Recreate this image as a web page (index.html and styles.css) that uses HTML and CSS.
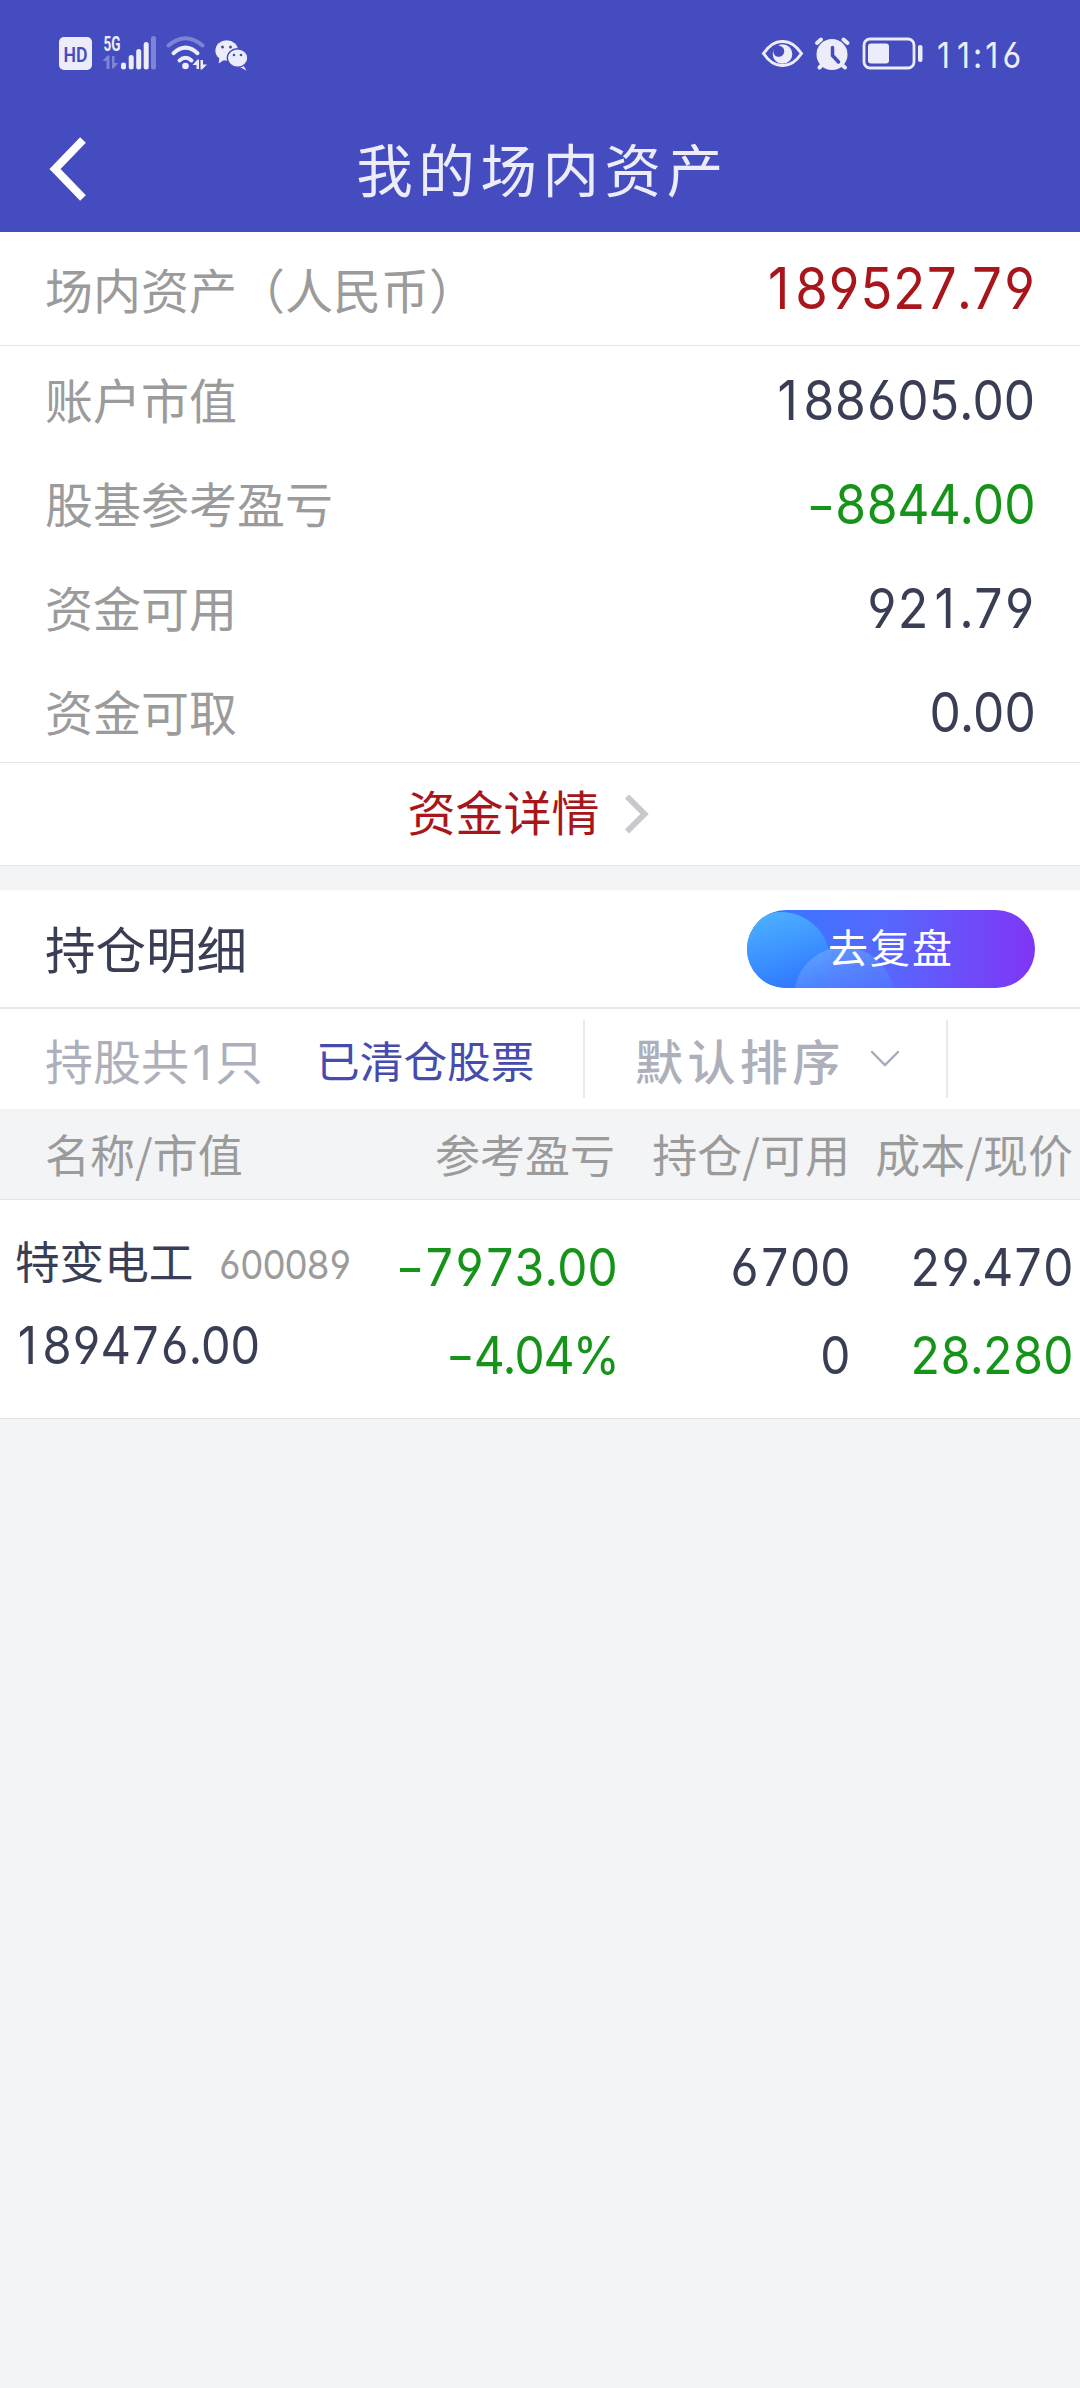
FILE: index.html
```html
<!DOCTYPE html>
<html lang="zh-CN">
<head>
<meta charset="utf-8">
<title>我的场内资产</title>
<link rel="stylesheet" href="styles.css">
</head>
<body>
<header class="top">
  <div class="status">
    <svg class="status-left" width="200" height="46" viewBox="56 30 200 46" fill="#ececfb">
      <rect x="59" y="37" width="33" height="33" rx="5"/>
      <text x="75.500" y="61.500" class="hd" text-anchor="middle" textLength="24" lengthAdjust="spacingAndGlyphs">HD</text>
      <text x="103.500" y="51" class="fiveg" textLength="17" lengthAdjust="spacingAndGlyphs">5G</text>
      <g opacity=".35"><path d="M102.500 61l5-5.500h2V69h-3V61zM118.500 63l-5 5.500h-1.500V56h2.500v7z"/><rect x="151" y="36" width="5" height="33.500" rx="2.500"/></g>
      <rect x="121" y="62.500" width="5" height="7" rx="2.300"/>
      <rect x="128.700" y="55" width="5" height="14.500" rx="2.500"/>
      <rect x="136.200" y="49" width="5" height="20.500" rx="2.500"/>
      <rect x="143.700" y="42" width="5" height="27.500" rx="2.500"/>
      <g fill="none" stroke="#ececfb" stroke-width="4" stroke-linecap="round">
        <path d="M168.500 45.500Q185.500 31 202.500 45.500" opacity=".35"/>
        <path d="M173.500 53.200Q185.500 42 197.500 53.200"/>
        <path d="M179.500 60.500Q185.500 55 191.500 60.500"/>
      </g>
      <circle cx="185.500" cy="66" r="3.300"/>
      <path d="M192.500 65l5-5.500h1.500V69h-2.500v-4zM207 64.500l-5 5h-1.500V60h2.500v4.500z"/>
      <ellipse cx="226.700" cy="50.500" rx="11.300" ry="10.300"/>
      <path d="M219.500 57l-.8 6.500 6-4z"/>
      <path d="M243 65l3.500 5.500-7-3.500z"/>
      <ellipse cx="237.600" cy="58" rx="10.300" ry="9.300" stroke="#444cbf" stroke-width="1.400"/>
      <g fill="#444cbf"><circle cx="222.500" cy="47" r="1.500"/><circle cx="230.500" cy="47" r="1.500"/><circle cx="234" cy="55" r="1.300"/><circle cx="241" cy="55" r="1.300"/></g>
    </svg>
    <div class="status-right">
      <svg width="164" height="46" viewBox="760 30 164 46" fill="#ececfb">
        <path d="M763.500 53.500Q772 41 782.500 41.500Q793 41 801.500 53.500Q793 66 782.500 65.500Q772 66 763.500 53.500z" fill="none" stroke="#ececfb" stroke-width="3"/>
        <circle cx="782.500" cy="54" r="9.800"/><path d="M773 46q5-2 7 0a5.500 5.500 0 1 1-6.500 7z" fill="#444cbf"/>
        <circle cx="832" cy="54.500" r="15.500"/>
        <g fill="none" stroke="#ececfb" stroke-width="4" stroke-linecap="round"><path d="M817 43l4-3.500M847.500 43l-4-3.500M822 65l-2.500 2.500M842 65l3 2.500"/></g>
        <path d="M832.500 47.500v8l6 6.500" fill="none" stroke="#444cbf" stroke-width="3.500" stroke-linecap="round"/>
        <rect x="864" y="39" width="50" height="29" rx="6" fill="none" stroke="#ececfb" stroke-width="2.800"/>
        <rect x="868" y="43.500" width="21" height="20" rx="3"/><rect x="918" y="45" width="4.500" height="17" rx="2"/>
      </svg>
      <span class="time num"><span class="one">1</span><span class="one">1</span>:<span class="one">1</span>6</span>
    </div>
  </div>
  <div class="nav">
    <svg class="back" width="40" height="66" viewBox="0 0 40 66"><path d="M34 4L6 33l28 29" fill="none" stroke="#fff" stroke-width="8"/></svg>
    <h1 class="title">我的场内资产</h1>
  </div>
</header>

<section class="summary">
  <div class="row total"><span class="label">场内资产（人民币）</span><span class="value num red"><span class="one">1</span>89527.79</span></div>
  <div class="rows">
    <div class="row"><span class="label">账户市值</span><span class="value num"><span class="one">1</span>88605.00</span></div>
    <div class="row"><span class="label">股基参考盈亏</span><span class="value num green"><i class="minus"></i>8844.00</span></div>
    <div class="row"><span class="label">资金可用</span><span class="value num">92<span class="one">1</span>.79</span></div>
    <div class="row"><span class="label">资金可取</span><span class="value num">0.00</span></div>
  </div>
  <div class="detail">
    <span>资金详情</span>
    <svg class="detail-arrow" width="26" height="42" viewBox="0 0 26 42"><path d="M3 3.500L20.500 21 3 38.500" fill="none" stroke="#c8c9ce" stroke-width="6"/></svg>
  </div>
</section>

<section class="holdings">
  <div class="holdings-head">
    <h2 class="heading">持仓明细</h2>
    <div class="review">
      <svg class="review-bg" width="288" height="78" viewBox="0 0 288 78">
        <defs>
          <linearGradient id="base" x1="0" x2="1"><stop offset="0" stop-color="#2f7bff"/><stop offset=".5" stop-color="#5866fd"/><stop offset="1" stop-color="#8035f5"/></linearGradient>
          <linearGradient id="big" x1=".3" y1="0" x2=".6" y2="1"><stop offset="0" stop-color="#4db2ff"/><stop offset=".8" stop-color="#2f78ff"/></linearGradient>
          <linearGradient id="small" x1=".3" y1="0" x2=".5" y2=".6"><stop offset="0" stop-color="#68a4ff" stop-opacity=".8"/><stop offset="1" stop-color="#4e78ff" stop-opacity=".5"/></linearGradient>
        </defs>
        <rect width="288" height="78" fill="url(#base)"/>
        <circle cx="34" cy="51" r="49" fill="url(#big)"/>
        <circle cx="97" cy="87" r="50" fill="url(#small)"/>
      </svg>
      <span class="review-text">去复盘</span>
    </div>
  </div>
  <div class="filters">
    <span class="count">持股共<span class="num one-inline">1</span>只</span>
    <span class="cleared">已清仓股票</span>
    <div class="sort"><span>默认排序</span>
      <svg width="30" height="20" viewBox="0 0 30 20"><path d="M2 3l13 13L28 3" fill="none" stroke="#a3abbd" stroke-width="2.400" stroke-linecap="round"/></svg>
    </div>
  </div>
  <div class="grid thead"><span>名称/市值</span><span>参考盈亏</span><span>持仓/可用</span><span>成本/现价</span></div>
  <div class="grid tbody">
    <div class="name-cell"><div class="name">特变电工<span class="code num">600089</span></div><div class="market num"><span class="one">1</span>89476.00</div></div>
    <div class="cell profit num green"><span><i class="minus"></i>7973.00</span><span class="percent"><i class="minus"></i>4.04%</span></div>
    <div class="cell num"><span>6700</span><span>0</span></div>
    <div class="cell num"><span>29.470</span><span class="green">28.280</span></div>
  </div>
</section>
</body>
</html>
```
FILE: styles.css
```css
* { box-sizing: border-box; }
body {
  margin: 0;
  min-height: 2388px;
  background: #f3f4f6;
  color: #393e54;
  font-family: "Noto Sans CJK SC", sans-serif;
}
h1, h2 { margin: 0; font-weight: 400; }
svg { display: block; flex: none; }
.num {
  font-family: Inter, Roboto, sans-serif;
  font-feature-settings: "tnum", "cv03", "cv04";
}
/* figures are set slightly condensed, with a footless full-width "1" */
.value, .cell, .code, .market, .time { transform: scaleX(.915); }
.value, .cell { transform-origin: right; }
.code, .market, .time { transform-origin: left; }
.one, .one-inline { display: inline-block; font-feature-settings: normal; text-align: center; }
.one { width: .63em; }
.red { color: #a8161b; }
.green { color: #16941a; }
.minus {
  display: inline-block;
  width: 22px;
  height: 4px;
  margin-right: 4px;
  vertical-align: 14px;
  background: currentColor;
}

.top { height: 232px; background: #444cbf; color: #ececfb; }
.status { display: flex; justify-content: space-between; height: 106px; padding: 30px 60px 0 56px; }
.hd { font: 600 21px Roboto, sans-serif; fill: #444cbf; }
.fiveg { font: 700 20px Roboto, sans-serif; }
.status-right { display: flex; gap: 9px; }
.time { width: 87px; font-size: 35px; line-height: 50px; letter-spacing: -.8px; white-space: nowrap; }
.nav { display: flex; align-items: center; height: 126px; padding: 0 49px; }
.title { flex: 1; margin-right: 35px; padding-bottom: 5px; text-align: center; font-size: 56.500px; line-height: 80px; letter-spacing: 5.600px; }

.summary, .holdings { background: #fff; }
.row { display: flex; align-items: center; justify-content: space-between; height: 104px; padding: 5px 45px 0; }
.total { height: 114px; padding-top: 0; border-bottom: 1px solid #e3e4e5; }
.label { padding-bottom: 5px; color: #9b9b9b; font-size: 48px; line-height: 70px; }
.total .label { padding-bottom: 2px; }
.value { padding-bottom: 2px; font-size: 54.500px; line-height: 70px; letter-spacing: -1.100px; }
.total .value { font-size: 57.500px; letter-spacing: -1.700px; }
.detail {
  display: flex;
  align-items: center;
  justify-content: center;
  gap: 24px;
  height: 104px;
  padding: 0 23px 8px 0;
  border: solid #e3e4e5;
  border-width: 1px 0;
  color: #a8161b;
  font-size: 48px;
  line-height: 70px;
}
.detail-arrow { margin-top: 7px; }

.holdings { margin-top: 24px; border-bottom: 1px solid #e3e4e5; }
.holdings-head { display: flex; align-items: center; justify-content: space-between; height: 119px; padding: 0 45px; border-bottom: 2px solid #e6eaec; }
.heading { padding-bottom: 3px; font-size: 50.500px; line-height: 72px; }
.review { display: grid; width: 288px; height: 78px; border-radius: 39px; overflow: hidden; place-items: center; }
.review > * { grid-area: 1 / 1; }
.review-text { z-index: 1; padding-bottom: 5px; color: #fff; font-size: 40px; line-height: 60px; letter-spacing: 2px; }
.filters { display: flex; align-items: center; height: 100px; padding-left: 45px; font-size: 48px; line-height: 70px; color: #adb0bb; }
.count { width: 271px; }
.one-inline { width: 26px; line-height: 60px; }
.cleared { width: 267px; color: #464cae; font-size: 43.700px; }
.sort { display: flex; align-items: center; gap: 25px; width: 365px; height: 78px; padding-left: 50px; border: solid #e6eaec; border-width: 0 2px; font-weight: 500; letter-spacing: 4.400px; }
.grid { display: grid; grid-template-columns: 380px 235px 235px 223px; }
.thead { height: 91px; border-bottom: 1px solid #e3e4e5; background: #f3f4f6; color: #9b9b9b; font-size: 45px; line-height: 90px; text-align: right; }
.thead span:first-child { padding-left: 45px; text-align: left; }
.tbody { height: 218px; padding-top: 24px; background: #fff; }
.name-cell { padding-left: 15px; }
.name { display: flex; align-items: baseline; gap: 25px; font-size: 44.600px; line-height: 72px; white-space: nowrap; }
.code { color: #9b9b9b; font-size: 40px; letter-spacing: -1.800px; }
.market { margin: 7px 0 0 -3px; font-size: 51.500px; line-height: 74px; letter-spacing: -1.200px; }
.cell { display: grid; grid-template-rows: 88px 88px; font-size: 52.500px; line-height: 87px; letter-spacing: -1px; text-align: right; white-space: nowrap; }
.profit { padding-right: 3px; }
.percent { margin-right: -1px; letter-spacing: -2px; }
```
